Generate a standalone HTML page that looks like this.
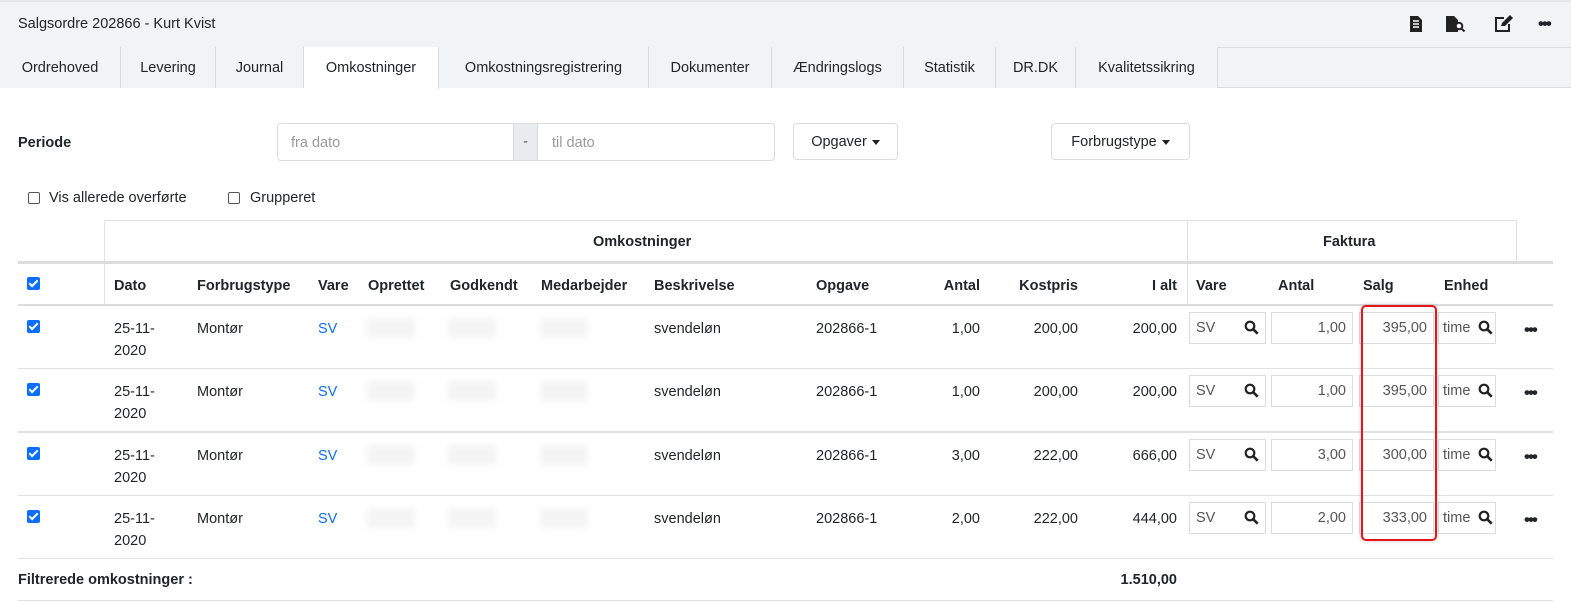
<!DOCTYPE html>
<html><head><meta charset="utf-8"><style>
*{box-sizing:border-box;margin:0;padding:0}
body{width:1571px;height:602px;position:relative;background:#fff;font-family:"Liberation Sans",sans-serif;font-size:14.5px;color:#212529;overflow:hidden}
.a{position:absolute;white-space:nowrap}
.b{font-weight:bold}
.r{text-align:right}
.hl{position:absolute;height:1px;background:#dee2e6}
.vl{position:absolute;width:1px;background:#dee2e6}
.cb{position:absolute;width:13px;height:13px;border-radius:2px;background:#0d6efd}
.cb:after{content:"";position:absolute;left:4px;top:1px;width:3px;height:7px;border:solid #fff;border-width:0 2px 2px 0;transform:rotate(45deg)}
.cbe{position:absolute;width:12px;height:12px;border:1px solid #555;border-radius:2px;background:#fff}
.inp{position:absolute;height:32px;border:1px solid #dcdcdc;background:#fff;color:#555;font-size:14.5px;line-height:30px;padding:0 6px}
.blur{position:absolute;height:20px;background:#f4f4f4;filter:blur(3px)}
.dots{position:absolute;font-weight:bold;font-size:17px;letter-spacing:-2px;line-height:17px}
.btn{position:absolute;border:1px solid #dcdcdc;border-radius:4px;height:37px;line-height:37px;text-align:center;background:#fff}
.tab{position:absolute;top:47px;height:41px;line-height:42px;text-align:center;border-right:1px solid #dcdcdc;background:#f2f3f5}
.car{display:inline-block;width:0;height:0;border-left:4px solid transparent;border-right:4px solid transparent;border-top:5px solid #222;vertical-align:middle;margin-left:5px}
</style></head><body>
<div class="a" style="left:0;top:0;width:1571px;height:47px;background:#f2f3f5;border-top:2px solid #e6e7e9"></div>
<div class="a" style="left:18px;top:16px;font-size:14.5px">Salgsordre 202866 - Kurt Kvist</div>
<svg class="a" style="left:1410px;top:16px" width="12" height="16" viewBox="0 0 12 16"><path d="M0 0h8l4 4v12H0z" fill="#222"/><path d="M3 5h6M3 8h6M3 11h6" stroke="#fff" stroke-width="1.5"/></svg>
<svg class="a" style="left:1446px;top:16px" width="22" height="16" viewBox="0 0 22 16"><path d="M0 0h8l4 4v12H0z" fill="#222"/><circle cx="13" cy="10" r="3.3" fill="#fff" stroke="#222" stroke-width="2"/><path d="M15.5 12.5l3 3" stroke="#222" stroke-width="2"/></svg>
<svg class="a" style="left:1495px;top:15px" width="18" height="17" viewBox="0 0 18 17"><path d="M9 3H1v13h13V9" fill="none" stroke="#222" stroke-width="2"/><path d="M6 11l1-3 8-8 3 3-8 8z" fill="#222"/></svg>
<div class="dots" style="left:1538px;top:15px">•••</div>
<div class="a" style="left:0;top:47px;width:1571px;height:41px;background:#f2f3f5;border-top:1px solid #dcdcdc;border-bottom:1px solid #dcdcdc"></div>
<div class="tab" style="left:0;width:121px">Ordrehoved</div>
<div class="tab" style="left:121px;width:95px">Levering</div>
<div class="tab" style="left:216px;width:88px">Journal</div>
<div class="tab" style="left:304px;width:135px;background:#fff;height:42px">Omkostninger</div>
<div class="tab" style="left:439px;width:210px">Omkostningsregistrering</div>
<div class="tab" style="left:649px;width:123px">Dokumenter</div>
<div class="tab" style="left:772px;width:132px">Ændringslogs</div>
<div class="tab" style="left:904px;width:92px">Statistik</div>
<div class="tab" style="left:996px;width:80px">DR.DK</div>
<div class="tab" style="left:1076px;width:142px">Kvalitetssikring</div>
<div class="a b" style="left:18px;top:135px">Periode</div>
<div class="a" style="left:277px;top:123px;width:498px;height:38px;border:1px solid #dcdcdc;border-radius:4px"></div>
<div class="a" style="left:513px;top:123px;width:25px;height:38px;background:#e9ecef;border:1px solid #dcdcdc;text-align:center;line-height:36px;color:#555">-</div>
<div class="a" style="left:291px;top:135px;color:#999">fra dato</div>
<div class="a" style="left:552px;top:135px;color:#999">til dato</div>
<div class="btn" style="left:793px;top:123px;width:105px">Opgaver<span class="car"></span></div>
<div class="btn" style="left:1051px;top:123px;width:139px">Forbrugstype<span class="car"></span></div>
<div class="cbe" style="left:28px;top:192px"></div><div class="a" style="left:49px;top:190px">Vis allerede overførte</div>
<div class="cbe" style="left:228px;top:192px"></div><div class="a" style="left:250px;top:190px">Grupperet</div>
<div class="hl" style="left:104px;top:220px;width:1413px"></div>
<div class="vl" style="left:104px;top:220px;height:85px"></div>
<div class="vl" style="left:1187px;top:220px;height:85px"></div>
<div class="vl" style="left:1516px;top:220px;height:42px"></div>
<div class="a b" style="left:593px;top:234px">Omkostninger</div>
<div class="a b" style="left:1323px;top:234px">Faktura</div>
<div class="hl" style="left:18px;top:261px;width:1535px;height:3px;background:#dcdcdc"></div>
<div class="cb" style="left:27px;top:277px"></div>
<div class="a b" style="left:114px;top:278px">Dato</div>
<div class="a b" style="left:197px;top:278px">Forbrugstype</div>
<div class="a b" style="left:318px;top:278px">Vare</div>
<div class="a b" style="left:368px;top:278px">Oprettet</div>
<div class="a b" style="left:450px;top:278px">Godkendt</div>
<div class="a b" style="left:541px;top:278px">Medarbejder</div>
<div class="a b" style="left:654px;top:278px">Beskrivelse</div>
<div class="a b" style="left:816px;top:278px">Opgave</div>
<div class="a b r" style="left:900px;top:278px;width:80px">Antal</div>
<div class="a b r" style="left:978px;top:278px;width:100px">Kostpris</div>
<div class="a b r" style="left:1077px;top:278px;width:100px">I alt</div>
<div class="a b" style="left:1196px;top:278px">Vare</div>
<div class="a b" style="left:1278px;top:278px">Antal</div>
<div class="a b" style="left:1363px;top:278px">Salg</div>
<div class="a b" style="left:1444px;top:278px">Enhed</div>
<div class="hl" style="left:18px;top:304px;width:1535px;height:2px;background:#dcdcdc"></div>
<div id="rows"></div>
<div class="hl" style="left:18px;top:368px;width:1535px"></div>
<div class="hl" style="left:18px;top:431px;width:1535px;height:2px"></div>
<div class="hl" style="left:18px;top:495px;width:1535px"></div>
<div class="hl" style="left:18px;top:558px;width:1535px"></div>
<div class="hl" style="left:18px;top:600px;width:1535px"></div>
<div class="a b" style="left:18px;top:572px">Filtrerede omkostninger :</div>
<div class="a b r" style="left:1077px;top:572px;width:100px">1.510,00</div>
<div class="a" style="left:1361px;top:305px;width:76px;height:236px;border:2px solid #e8141a;border-radius:5px;box-shadow:0 0 4px rgba(0,0,0,.2)"></div>
<script>
var d=[[305,"1,00","200,00","200,00","1,00","395,00"],[368,"1,00","200,00","200,00","1,00","395,00"],[432,"3,00","222,00","666,00","3,00","300,00"],[495,"2,00","222,00","444,00","2,00","333,00"]];
var h="";
var mg='<svg width="15" height="15" viewBox="0 0 15 15" style="position:absolute;right:6px;top:7px"><circle cx="6" cy="6" r="4.3" fill="none" stroke="#222" stroke-width="2.2"/><path d="M9.2 9.2l4.5 4.5" stroke="#222" stroke-width="2.6"/></svg>';
d.forEach(function(r){var y=r[0],t=y+13;
h+='<div class="cb" style="left:27px;top:'+(y+15)+'px"></div>';
h+='<div class="a" style="left:114px;top:'+t+'px;line-height:22px">25-11-<br>2020</div>';
h+='<div class="a" style="left:197px;top:'+t+'px;line-height:22px">Montør</div>';
h+='<div class="a" style="left:318px;top:'+t+'px;line-height:22px;color:#0d6efd">SV</div>';
h+='<div class="blur" style="left:367px;top:'+(y+13)+'px;width:48px"></div><div class="blur" style="left:448px;top:'+(y+13)+'px;width:48px"></div><div class="blur" style="left:540px;top:'+(y+13)+'px;width:48px"></div>';
h+='<div class="a" style="left:654px;top:'+t+'px;line-height:22px">svendeløn</div>';
h+='<div class="a" style="left:816px;top:'+t+'px;line-height:22px">202866-1</div>';
h+='<div class="a r" style="left:900px;top:'+t+'px;width:80px;line-height:22px">'+r[1]+'</div>';
h+='<div class="a r" style="left:978px;top:'+t+'px;width:100px;line-height:22px">'+r[2]+'</div>';
h+='<div class="a r" style="left:1077px;top:'+t+'px;width:100px;line-height:22px">'+r[3]+'</div>';
h+='<div class="inp" style="left:1189px;top:'+(y+7)+'px;width:77px">SV'+mg+'</div>';
h+='<div class="inp r" style="left:1271px;top:'+(y+7)+'px;width:82px">'+r[4]+'</div>';
h+='<div class="inp r" style="left:1359px;top:'+(y+7)+'px;width:75px">'+r[5]+'</div>';
h+='<div class="inp" style="left:1438px;top:'+(y+7)+'px;width:58px;padding:0 4px;overflow:hidden">time'+mg.replace("right:6px","right:2px")+'</div>';
h+='<div class="dots" style="left:1524px;top:'+(y+16)+'px">•••</div>';
});
document.getElementById("rows").innerHTML=h;
</script>
</body></html>
